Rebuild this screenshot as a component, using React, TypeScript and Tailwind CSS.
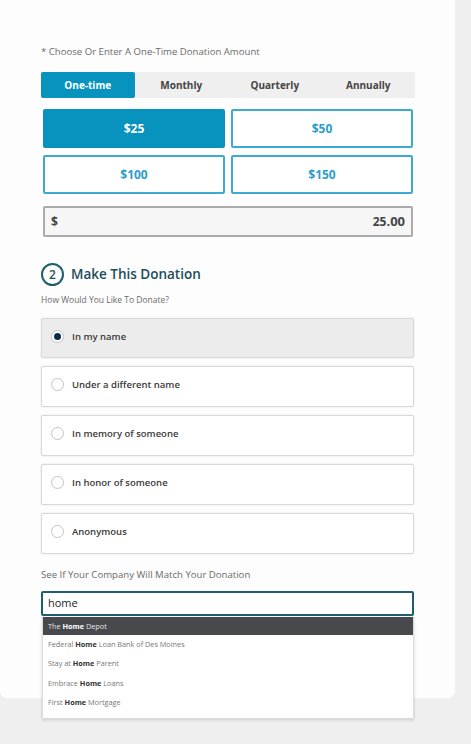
const amounts = ["$25", "$50", "$100", "$150"];
const tabs = ["One-time", "Monthly", "Quarterly", "Annually"];
const options = [
  "In my name",
  "Under a different name",
  "In memory of someone",
  "In honor of someone",
  "Anonymous",
];
const matches = [
  ["The ", "Home", " Depot"],
  ["Federal ", "Home", " Loan Bank of Des Moines"],
  ["Stay at ", "Home", " Parent"],
  ["Embrace ", "Home", " Loans"],
  ["First ", "Home", " Mortgage"],
];

export default function App() {
  return (
    <div className="h-[744px] w-[471px] overflow-hidden bg-[#efefef] font-['Open_Sans',sans-serif]">
      <div className="h-[698px] w-[455px] rounded-b-[7px] bg-[#fdfdfd] pl-[41px] pr-[40px] pt-[45px]">
        {/* step 1 amounts */}
        <p className="text-[9.6px] leading-[14px] text-[#6b6b6b]">
          * Choose Or Enter A One-Time Donation Amount
        </p>
        <div className="mt-[13px] grid h-[26px] grid-cols-4 bg-[#efefef]">
          {tabs.map((t, i) => (
            <div
              key={t}
              className={
                i === 0
                  ? "flex items-center justify-center rounded-[2px] bg-[#0893bf] text-[10px] font-bold text-white"
                  : "flex items-center justify-center text-[10px] font-bold text-[#444]"
              }
            >
              {t}
            </div>
          ))}
        </div>
        <div className="mx-[2px] mt-[11px] grid grid-cols-2 gap-x-[6px] gap-y-[7px]">
          {amounts.map((a, i) => (
            <div
              key={a}
              className={
                i === 0
                  ? "flex h-[39px] items-center justify-center rounded-[2px] bg-[#0893bf] text-[12px] font-bold text-white"
                  : "flex h-[39px] items-center justify-center rounded-[2px] border-2 border-[#3eaad4] bg-white text-[12px] font-bold text-[#2c9ecb]"
              }
            >
              {a}
            </div>
          ))}
        </div>
        <div className="mx-[2px] mt-[12px] flex h-[31px] items-center justify-between rounded-[2px] border-2 border-[#ababab] bg-[#f6f6f6] px-[6px] text-[12px] font-bold text-[#444]">
          <span>$</span>
          <span>
            25<span className="text-[13px]">.00</span>
          </span>
        </div>

        {/* step 2 */}
        <div className="mt-[26px] flex items-center gap-[7px]">
          <div className="flex h-[23px] w-[23px] items-center justify-center rounded-full border-2 border-[#1f5e6c] text-[12px] font-semibold text-[#1f4f5c]">
            2
          </div>
          <h2 className="text-[13.5px] font-semibold text-[#1c4d5b]">Make This Donation</h2>
        </div>
        <p className="mt-[7px] text-[8.5px] leading-[14px] text-[#6b6b6b]">
          How Would You Like To Donate?
        </p>
        <div className="mr-[1px] mt-[11px] flex flex-col gap-[8px]">
          {options.map((o, i) => (
            <div
              key={o}
              className={
                i === 0
                  ? "flex h-[40px] items-start gap-[8px] rounded-[2px] border border-[#d9d9d9] bg-[#ececec] pl-[9px] pt-[11px] shadow-[0_0_2px_rgba(0,0,0,0.12)]"
                  : "flex h-[41px] items-start gap-[8px] rounded-[2px] border border-[#d9d9d9] bg-white pl-[9px] pt-[11px] shadow-[0_0_2px_rgba(0,0,0,0.12)]"
              }
            >
              <span className="flex h-[13px] w-[13px] items-center justify-center rounded-full border border-[#c4c4c4] bg-white">
                {i === 0 && <span className="h-[7px] w-[7px] rounded-full bg-[#0b2d4a]" />}
              </span>
              <span className="text-[9.5px] font-semibold leading-[13px] text-[#3a3a3a]">{o}</span>
            </div>
          ))}
        </div>

        {/* company match */}
        <p className="mt-[14px] text-[9.6px] leading-[14px] text-[#6b6b6b]">
          See If Your Company Will Match Your Donation
        </p>
        <div className="relative mr-[1px] mt-[9px]">
          <div className="flex h-[25px] items-center rounded-[2px] border-2 border-[#1f5e6c] bg-white px-[5px] text-[11px] text-[#222]">
            home
          </div>
          <div className="absolute left-[1px] right-0 top-[26px] z-10 border-x border-b border-[#dcdcdc] bg-white pb-[6px] shadow-[0_1px_3px_rgba(0,0,0,0.15)]">
            {matches.map((m, i) => (
              <div
                key={i}
                className={
                  i === 0
                    ? "flex h-[18px] items-center bg-[#48494d] px-[5px] text-[7.3px] text-[#e6e6e6]"
                    : "flex h-[19.3px] items-center px-[5px] text-[7.3px] text-[#777]"
                }
              >
                <span>
                  {m[0]}
                  <b className={i === 0 ? "text-white" : "text-[#333]"}>{m[1]}</b>
                  {m[2]}
                </span>
              </div>
            ))}
          </div>
        </div>
      </div>
    </div>
  );
}
